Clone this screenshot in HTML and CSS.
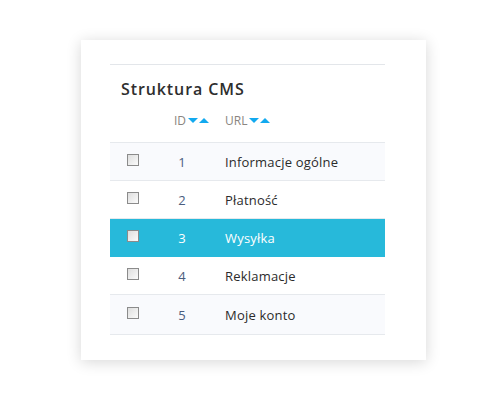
FILE: index.html
```html
<!DOCTYPE html>
<html lang="pl">
<head>
<meta charset="utf-8">
<link rel="stylesheet" href="styles.css">
</head>
<body>
<div class="card">
  <div class="panel">
    <h2 class="title">Struktura CMS</h2>
    <div class="row head">
      <div class="c-check"></div>
      <div class="c-id">ID<span class="sort"><span class="down"></span><span class="up"></span></span></div>
      <div class="c-url">URL<span class="sort"><span class="down"></span><span class="up"></span></span></div>
    </div>
    <div class="row odd"><div class="c-check"><span class="box"></span></div><div class="c-id"><span class="num">1</span></div><div class="c-url">Informacje ogólne</div></div>
    <div class="row"><div class="c-check"><span class="box"></span></div><div class="c-id"><span class="num">2</span></div><div class="c-url">Płatność</div></div>
    <div class="row active"><div class="c-check"><span class="box"></span></div><div class="c-id"><span class="num">3</span></div><div class="c-url">Wysyłka</div></div>
    <div class="row"><div class="c-check"><span class="box"></span></div><div class="c-id"><span class="num">4</span></div><div class="c-url">Reklamacje</div></div>
    <div class="row odd last"><div class="c-check"><span class="box"></span></div><div class="c-id"><span class="num">5</span></div><div class="c-url">Moje konto</div></div>
  </div>
</div>
</body>
</html>
```
FILE: styles.css
```css
* { box-sizing: border-box; }
html, body { margin: 0; padding: 0; background: #fff; }
body {
  width: 500px;
  height: 400px;
  font-family: "Open Sans", "Liberation Sans", sans-serif;
  color: #333;
  padding: 40px 0 0 81px;
}
.card {
  width: 345px;
  height: 320px;
  background: #fff;
  box-shadow: 0 2px 14px rgba(0,0,0,0.16);
  padding: 24px 41px 0 29px;
}
.panel {
  border-top: 1px solid #e3e6ea;
}
.title {
  margin: 0;
  padding: 13px 0 0 11px;
  height: 47px;
  font-size: 16px;
  font-weight: 600;
  letter-spacing: 0.9px;
  color: #2e2e2e;
}
.row {
  display: flex;
  align-items: center;
  height: 38px;
  border-bottom: 1px solid #e6e9ed;
  font-size: 13px;
  letter-spacing: 0.2px;
  color: #2b2b2b;
}
.row.head {
  height: 31px;
  align-items: flex-start;
  color: #8a8580;
  font-size: 12px;
  letter-spacing: 0;
  border-bottom: 1px solid #e6e9ed;
}
.row.last { height: 40px; }
.row.odd { background: #f9fafd; }
.row.active { background: #27b9da; color: #fff; border-bottom-color: #27b9da; }
.c-check { width: 46px; display: flex; justify-content: center; }
.c-id { width: 69px; padding-left: 18px; display: flex; align-items: center; }
.c-url { flex: 1; display: flex; align-items: center; }
.head .c-check { height: 1px; }
.num { width: 16px; text-align: center; color: #4b5d7e; }
.active .num { color: #fff; }
.box {
  width: 12px;
  height: 12px;
  border: 1px solid #8b8b8b;
  background: linear-gradient(135deg, #dedede, #fbfbfb);
  margin-top: -4px;
}
.sort { display: inline-flex; gap: 1px; margin-left: 2px; }
.down, .up { width: 0; height: 0; border-left: 5px solid transparent; border-right: 5px solid transparent; }
.down { border-top: 5px solid #12a9ef; }
.up { border-bottom: 5px solid #12a9ef; }
```
